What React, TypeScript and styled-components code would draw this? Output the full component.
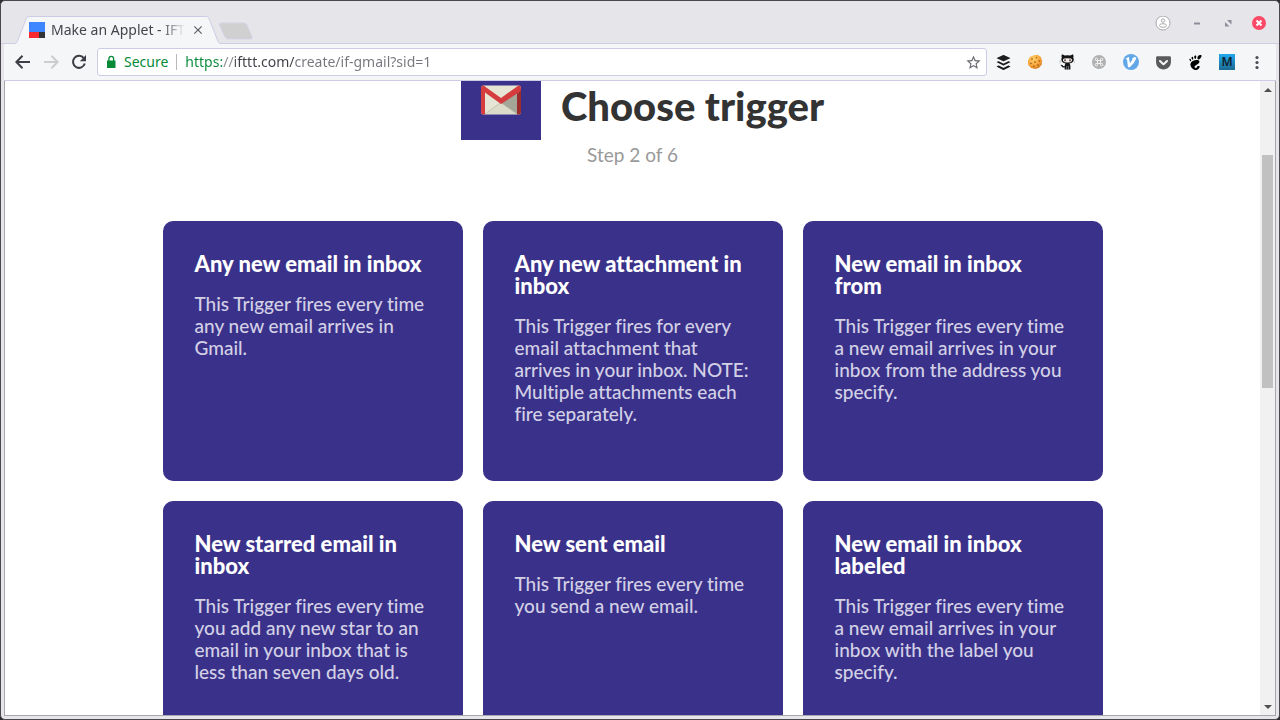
import React from "react";
import styled, { createGlobalStyle } from "styled-components";
import { FaBuffer, FaGetPocket } from "react-icons/fa";
import { SiGnome } from "react-icons/si";
import { MdStarBorder, MdClose } from "react-icons/md";

const GlobalStyle = createGlobalStyle`
  * { box-sizing: border-box; }
  body { margin: 0; background: #2e2b30; }
  button { padding: 0; border: 0; background: none; font: inherit; color: inherit; cursor: pointer; }
  h1, h2, p, ul { margin: 0; padding: 0; }
  svg { display: block; flex: none; }
`;

const Window = styled.div`
  display: flex;
  flex-direction: column;
  height: 100vh;
  overflow: hidden;
  border: 1px solid #4a474d;
  border-radius: 5px;
  background: #e6e5ea;
  font-family: "Noto Sans", "Open Sans", sans-serif;
`;

const TitleBar = styled.header`
  display: flex;
  align-items: flex-end;
  height: 43px;
  flex: none;
  padding: 0 12px 0 14px;
  box-shadow: inset 0 -1px 0 #cccce6;
`;

const Tab = styled.div`
  position: relative;
  display: flex;
  align-items: center;
  width: 206px;
  height: 29px;
  padding: 0 16px 0 14px;
`;

const TabShape = styled.svg`
  position: absolute;
  inset: 0;
`;

const TabLabel = styled.span`
  position: relative;
  flex: 1;
  margin-left: 6px;
  overflow: hidden;
  white-space: nowrap;
  font-size: 14px;
  line-height: 20px;
  color: #46444c;
  mask-image: linear-gradient(90deg, #000 110px, transparent 134px);
`;

const TabIcon = styled.svg`
  position: relative;
`;

const TabClose = styled.button`
  position: relative;
  margin-left: 6px;
  color: #5c5b62;
`;

const NewTab = styled.button`
  align-self: flex-end;
  margin: 0 0 4px -3px;
`;

const WindowControls = styled.div`
  display: flex;
  align-items: center;
  gap: 18px;
  margin: 0 0 12px auto;
`;

const Toolbar = styled.div`
  display: flex;
  align-items: center;
  flex: none;
  height: 37px;
  margin: 0 3px;
  padding: 0 13px 0 9px;
  background: #f4f6f8;
  border-bottom: 1px solid #cccce6;
`;

const NavButton = styled.button<{ $muted?: boolean }>`
  width: 20px;
  margin-right: 8px;
  color: ${(p) => (p.$muted ? "#cdcdd0" : "#3f3e46")};
`;

const AddressBar = styled.form`
  display: flex;
  align-items: center;
  flex: 1;
  height: 28px;
  padding: 0 5px 0 6px;
  background: #fff;
  border: 1px solid #cccce6;
  border-radius: 3px;
  font-size: 14px;
  color: #068a38;
`;

const Secure = styled.span`
  margin: 0 8px 0 6px;
  padding-right: 8px;
  border-right: 1px solid #b8b8bc;
  line-height: 16px;
`;

const UrlInput = styled.input`
  flex: 1;
  min-width: 0;
  height: 18px;
  padding: 0;
  border: 0;
  outline: 0;
  font: inherit;
  line-height: 18px;
  color: transparent;
  background: linear-gradient(90deg, #068a38 37px, #8b8b90 37px 50px, #3f3e46 50px 109px, #77767c 109px);
  background-clip: text;
  -webkit-background-clip: text;
`;

const Extensions = styled.div`
  display: flex;
  align-items: center;
  gap: 16px;
  margin-left: 8px;
`;

const ExtensionButton = styled.button<{ $color?: string }>`
  display: grid;
  place-items: center;
  width: 16px;
  height: 20px;
  color: ${(p) => p.$color || "#1d1d20"};
`;

const MenuButton = styled(ExtensionButton)`
  width: 12px;
`;

const MBadge = styled.span`
  display: grid;
  place-items: center;
  width: 16px;
  height: 16px;
  background: linear-gradient(#21a8ee, #1c6a92);
  color: #10222e;
  font-size: 12px;
  font-weight: 600;
  line-height: 16px;
`;

const Viewport = styled.div`
  display: flex;
  flex: 1;
  min-height: 0;
  margin: 0 3px 3px;
  border: 1px solid #a9a7ad;
  border-top: 0;
  background: #fff;
`;

const Page = styled.main`
  flex: 1;
  min-width: 0;
  overflow: hidden;
  font-family: Lato, "Liberation Sans", sans-serif;
  font-variant-ligatures: none;
`;

const PageHeader = styled.div`
  display: flex;
  justify-content: center;
  gap: 20px;
  margin: -21px 0 0 20px;
`;

const ServiceTile = styled.div`
  display: grid;
  place-items: center;
  width: 80px;
  height: 80px;
  background: #3a328a;
`;

const PageTitle = styled.h1`
  padding-top: 22px;
  font-size: 40px;
  line-height: 48px;
  font-weight: 900;
  color: #333;
`;

const Step = styled.p`
  margin-top: 4px;
  text-align: center;
  font-size: 19px;
  line-height: 22px;
  color: #999;
`;

const CardGrid = styled.ul`
  display: grid;
  grid-template-columns: repeat(auto-fit, 300px);
  gap: 20px;
  justify-content: center;
  max-width: 940px;
  margin: 55px auto 0;
  list-style: none;
`;

const Card = styled.button`
  display: flex;
  flex-direction: column;
  width: 100%;
  min-height: 260px;
  padding: 32px;
  border-radius: 10px;
  background: #3a328a;
  text-align: left;
`;

const CardTitle = styled.h2`
  font-size: 22px;
  line-height: 22px;
  font-weight: 900;
  color: #fff;
  white-space: pre;
`;

const CardText = styled.p`
  margin-top: 18px;
  font-size: 19px;
  line-height: 22px;
  font-weight: 500;
  color: #d3d0e6;
  white-space: pre;
`;

const Scrollbar = styled.div`
  display: flex;
  flex-direction: column;
  align-items: center;
  justify-content: space-between;
  width: 15px;
  background: #f1f1f1;
`;

const ScrollTrack = styled.div`
  flex: 1;
  width: 11px;
  padding-top: 57px;
`;

const ScrollThumb = styled.div`
  height: 43%;
  background: #c1c1c1;
`;

const ScrollArrow = styled.button`
  display: grid;
  place-items: center;
  width: 15px;
  height: 17px;
`;

const triggers = [
  { title: "Any new email in inbox", text: "This Trigger fires every time\nany new email arrives in\nGmail." },
  { title: "Any new attachment in\ninbox", text: "This Trigger fires for every\nemail attachment that\narrives in your inbox. NOTE:\nMultiple attachments each\nfire separately." },
  { title: "New email in inbox\nfrom", text: "This Trigger fires every time\na new email arrives in your\ninbox from the address you\nspecify." },
  { title: "New starred email in\ninbox", text: "This Trigger fires every time\nyou add any new star to an\nemail in your inbox that is\nless than seven days old." },
  { title: "New sent email", text: "This Trigger fires every time\nyou send a new email." },
  { title: "New email in inbox\nlabeled", text: "This Trigger fires every time\na new email arrives in your\ninbox with the label you\nspecify." },
];

const ArrowIcon = ({ flip }: { flip?: boolean }) => (
  <svg width="20" height="20" viewBox="0 0 20 20" fill="none" stroke="currentColor" strokeWidth="2">
    <path d={flip ? "M3 10H16M10.500 3.800 16.600 10 10.500 16.200" : "M17 10H4M9.500 3.800 3.400 10 9.500 16.200"} />
  </svg>
);

const ReloadIcon = () => (
  <svg width="20" height="20" viewBox="0 0 20 20">
    <path d="M14.800 6.200A6 6 0 1 0 15.800 11.500" fill="none" stroke="currentColor" strokeWidth="2" />
    <path d="M17 3v6.200h-6.200z" fill="currentColor" />
  </svg>
);

const LockIcon = () => (
  <svg width="14" height="14" viewBox="0 0 14 14">
    <path d="M3 5.500h8.500V13H3z" fill="currentColor" />
    <path d="M4.900 6V3.800a2.350 2.350 0 0 1 4.700 0V6" fill="none" stroke="currentColor" strokeWidth="1.300" />
  </svg>
);

const Cookie = () => (
  <svg width="16" height="16" viewBox="0 0 16 16">
    <defs>
      <radialGradient id="cookie" cx=".4" cy=".3" r=".8">
        <stop offset="0" stopColor="#ffcf66" />
        <stop offset=".6" stopColor="#f5a138" />
        <stop offset="1" stopColor="#cc701c" />
      </radialGradient>
    </defs>
    <path d="M7 1.200 10.500.800 13.800 3 15 6.500l-.3 4-2.500 3.300-3.800 1.300-4.300-1L1.300 11 .9 7l1.800-3.900z" fill="url(#cookie)" />
    <g fill="#8a4a18">
      <circle cx="5" cy="5" r=".8" /><circle cx="9.500" cy="3.600" r=".7" /><circle cx="12.300" cy="7" r=".8" />
      <circle cx="8" cy="8" r=".8" /><circle cx="4" cy="9.400" r=".7" /><circle cx="11" cy="11" r=".8" /><circle cx="6.800" cy="12.300" r=".7" />
    </g>
  </svg>
);

const Octocat = () => (
  <svg width="16" height="16" viewBox="0 0 16 16">
    <path d="M3 .3 5.700 1.600Q8.500 1 11.300 1.600L14 .3Q15 2.200 14.300 3.600 15.300 5.200 14.400 7.300 13.300 9.300 10.500 9.500 11.500 10.500 11.400 12V15.500H5.700V13.400Q3.400 13.900 2.700 12.400 2.300 11.300 1.300 10.900 2.900 10.300 3.800 11.600 4.500 12.500 5.700 12 5.600 10.500 6.500 9.500 3.700 9.200 2.700 7.300 1.800 5.200 2.800 3.600 2 2 3 .3Z" fill="#161616" />
    <path d="M5 4.500Q8.500 3.800 12 4.500 13.600 5.300 12.900 7 12.100 8.500 8.500 8.500T4.100 7Q3.400 5.300 5 4.500Z" fill="#f5eee9" />
    <ellipse cx="6" cy="6.300" rx=".8" ry="1.100" fill="#3e2b28" />
    <ellipse cx="11" cy="6.300" rx=".8" ry="1.100" fill="#3e2b28" />
    <path d="M7.700 12v4M9.500 12v4" stroke="#aaa" strokeWidth=".6" />
    <path d="M0 7.200 2 6.900M.3 9 2.200 8M15 6.900l1 .3M14.800 8l1.200.7" stroke="#888" strokeWidth=".4" />
  </svg>
);

const CommandDisc = () => (
  <svg width="16" height="16" viewBox="0 0 16 16">
    <circle cx="8" cy="8" r="7" fill="#b0b0b0" />
    <path d="M6.500 6.500h3v3h-3zM6.500 6.500H5.200a1.200 1.200 0 1 1 1.300-1.300zM9.500 6.500V5.200a1.200 1.200 0 1 1 1.300 1.300zM9.500 9.500h1.300a1.200 1.200 0 1 1-1.300 1.300zM6.500 9.500v1.300a1.200 1.200 0 1 1-1.300-1.300z" fill="none" stroke="#f4f4f4" strokeWidth="1" />
  </svg>
);

const Vimium = () => (
  <svg width="16" height="16" viewBox="0 0 16 16">
    <circle cx="8" cy="8" r="8" fill="#62a8e8" />
    <path d="M2.500 4.800 5.800 2.800 6.900 9.200 9.500 5.500 9 4.500 12 2.800 13.300 4.600Q11.500 9.500 6.800 13.200H5L4 5.600z" fill="#fff" />
  </svg>
);

const GmailLogo = () => (
  <svg width="40" height="30" viewBox="0 0 40 30">
    <rect y=".5" width="40" height="29" rx="2.500" fill="#e6e4d5" />
    <path d="M36 5v24L20 18z" fill="#a4a697" />
    <path d="M4 29 20 18l16 11z" fill="#dcdac8" />
    <path d="M4 29 20 17.500 36 29" fill="none" stroke="#b4b2a4" strokeWidth=".7" />
    <path d="M0 3Q0 .5 2.500.5L20 13 37.500.5Q40 .5 40 3V6L20 19 4 7.500V29.500H2.500Q0 29.500 0 27z" fill="#d53c3d" />
    <path d="M36 8.500 40 5.500V27q0 2.500-2.500 2.500H36z" fill="#9c2c2c" />
  </svg>
);

export default function App() {
  return (
    <>
      <GlobalStyle />
      <Window>
        <TitleBar>
          <Tab>
            <TabShape width="206" height="29" viewBox="0 0 206 29">
              <path d="M0 28.500Q1.500 28.500 2.300 26.500L11.500 3Q12.300 1.500 14 1.500H191Q193 1.500 193.800 3L203 26.500Q204 28.500 206 28.500V29H0Z" fill="#f4f6f8" />
              <path d="M0 28.500Q1.500 28.500 2.300 26.500L11.500 3Q12.300 1.500 14 1.500H191Q193 1.500 193.800 3L203 26.500Q204 28.500 206 28.500" fill="none" stroke="#cccce6" />
            </TabShape>
            <TabIcon width="16" height="16" viewBox="0 0 16 16">
              <path d="M0 0h16v10H0z" fill="#3d86ff" />
              <path d="M0 10h10v6H0z" fill="#fd2930" />
              <path d="M10 10h6v6h-6z" fill="#333338" />
            </TabIcon>
            <TabLabel>Make an Applet - IFT</TabLabel>
            <TabClose aria-label="Close tab"><MdClose size={14} /></TabClose>
          </Tab>
          <NewTab aria-label="New tab">
            <svg width="36" height="18" viewBox="0 0 36 18">
              <path d="M3 1H26Q28 1 29 3L34 15Q34.500 17 33 17H10Q8 17 7 15L1.500 3Q1 1 3 1Z" fill="#d0d0d0" stroke="#d3d3e6" />
            </svg>
          </NewTab>
          <WindowControls>
            <button aria-label="Profile">
              <svg width="16" height="16" viewBox="0 0 16 16" fill="#fff" stroke="#a8a8ac">
                <circle cx="8" cy="7" r="7" /><circle cx="8" cy="4.500" r="1.700" /><ellipse cx="8" cy="9.500" rx="3.500" ry="1.800" />
              </svg>
            </button>
            <button aria-label="Minimize">
              <svg width="16" height="16" viewBox="0 0 16 16"><path d="M5 6.500h6v2H5z" fill="#8d8c99" /></svg>
            </button>
            <button aria-label="Restore">
              <svg width="10" height="16" viewBox="0 0 10 16"><path d="M4 4h4.500v4.500zM2 6l4.500 4.500H2z" fill="#8d8c99" /></svg>
            </button>
            <button aria-label="Close window">
              <svg width="16" height="16" viewBox="0 0 16 16"><circle cx="8" cy="7" r="7" fill="#fc4a66" /><path d="m5.500 4.500 5 5m0-5-5 5" stroke="#fff" strokeWidth="2" /></svg>
            </button>
          </WindowControls>
        </TitleBar>
        <Toolbar>
          <NavButton aria-label="Back"><ArrowIcon /></NavButton>
          <NavButton aria-label="Forward" $muted><ArrowIcon flip /></NavButton>
          <NavButton aria-label="Reload"><ReloadIcon /></NavButton>
          <AddressBar onSubmit={(e) => e.preventDefault()}>
            <LockIcon />
            <Secure>Secure</Secure>
            <UrlInput aria-label="Address" defaultValue="https://ifttt.com/create/if-gmail?sid=1" />
            <ExtensionButton type="button" aria-label="Bookmark this page" $color="#6a6970"><MdStarBorder size={17} /></ExtensionButton>
          </AddressBar>
          <Extensions>
            <ExtensionButton aria-label="Buffer"><FaBuffer size={17} /></ExtensionButton>
            <ExtensionButton aria-label="Cookies"><Cookie /></ExtensionButton>
            <ExtensionButton aria-label="GitHub"><Octocat /></ExtensionButton>
            <ExtensionButton aria-label="Shortcuts"><CommandDisc /></ExtensionButton>
            <ExtensionButton aria-label="Vimium"><Vimium /></ExtensionButton>
            <ExtensionButton aria-label="Pocket" $color="#5a5a5c"><FaGetPocket size={17} /></ExtensionButton>
            <ExtensionButton aria-label="GNOME" $color="#000"><SiGnome size={15} /></ExtensionButton>
            <ExtensionButton aria-label="Material"><MBadge>M</MBadge></ExtensionButton>
            <MenuButton aria-label="Menu" $color="#4b4a52">
              <svg width="12" height="20" viewBox="0 0 12 20" fill="currentColor">
                <circle cx="6" cy="5.500" r="1.600" /><circle cx="6" cy="10.500" r="1.600" /><circle cx="6" cy="15.500" r="1.600" />
              </svg>
            </MenuButton>
          </Extensions>
        </Toolbar>
        <Viewport>
          <Page>
            <PageHeader>
              <ServiceTile><GmailLogo /></ServiceTile>
              <PageTitle>Choose trigger</PageTitle>
            </PageHeader>
            <Step>Step 2 of 6</Step>
            <CardGrid>
              {triggers.map((t) => (
                <li key={t.title}>
                  <Card>
                    <CardTitle>{t.title}</CardTitle>
                    <CardText>{t.text}</CardText>
                  </Card>
                </li>
              ))}
            </CardGrid>
          </Page>
          <Scrollbar>
            <ScrollArrow aria-label="Scroll up">
              <svg width="8" height="4" viewBox="0 0 8 4"><path d="M0 4 4 0l4 4z" fill="#505050" /></svg>
            </ScrollArrow>
            <ScrollTrack><ScrollThumb /></ScrollTrack>
            <ScrollArrow aria-label="Scroll down">
              <svg width="8" height="4" viewBox="0 0 8 4"><path d="m0 0 4 4 4-4z" fill="#505050" /></svg>
            </ScrollArrow>
          </Scrollbar>
        </Viewport>
      </Window>
    </>
  );
}
